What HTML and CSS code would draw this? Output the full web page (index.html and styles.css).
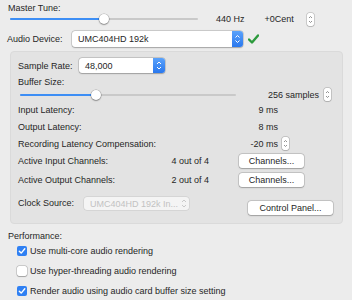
FILE: index.html
```html
<!DOCTYPE html>
<html lang="en">
<head>
  <meta charset="UTF-8">
  <title>Audio Preferences</title>
  <link rel="stylesheet" href="styles.css">
</head>
<body>
  <div class="pane">
    <div class="label-line">Master Tune:</div>
    <div class="tune-row">
      <div class="slider tune-slider">
        <div class="fill" style="width: 50%;"></div>
        <div class="knob" style="left: 50%;"></div>
      </div>
      <span class="hz">440 Hz</span>
      <span class="cent">+0Cent</span>
      <span class="stepper"><svg width="7" height="13" viewBox="0 0 7 13"><path d="M2 5 L3.5 3.5 L5 5 M2 8 L3.5 9.5 L5 8" fill="none" stroke="#777" stroke-width="0.8"/></svg></span>
    </div>

    <div class="device-row">
      <span class="device-label">Audio Device:</span>
      <div class="popup device-popup">
        <span class="popup-text">UMC404HD 192k</span>
        <span class="popup-arrows"><svg width="11" height="16" viewBox="0 0 11 16"><path d="M3.5 6.5 L5.5 4.5 L7.5 6.5 M3.5 9.5 L5.5 11.5 L7.5 9.5" fill="none" stroke="#fff" stroke-width="1"/></svg></span>
      </div>
      <svg class="check" width="11" height="10" viewBox="0 0 11 10"><path d="M1 5.5 L4 8.5 L10 1.5" fill="none" stroke="#2c9a3c" stroke-width="2.4" stroke-linecap="round" stroke-linejoin="round"/></svg>
    </div>

    <div class="group">
      <div class="row rate-row">
        <span class="rate-label">Sample Rate:</span>
        <div class="popup rate-popup">
          <span class="popup-text">48,000</span>
          <span class="popup-arrows"><svg width="12" height="15" viewBox="0 0 12 15"><path d="M4 6 L6 4 L8 6 M4 9 L6 11 L8 9" fill="none" stroke="#fff" stroke-width="1"/></svg></span>
        </div>
      </div>
      <div class="row buf-label">Buffer Size:</div>
      <div class="row buf-row">
        <div class="slider buf-slider">
          <div class="fill" style="width: 35%;"></div>
          <div class="knob" style="left: 35%;"></div>
        </div>
        <span class="samples">256 samples</span>
        <span class="stepper"><svg width="7" height="13" viewBox="0 0 7 13"><path d="M2 5 L3.5 3.5 L5 5 M2 8 L3.5 9.5 L5 8" fill="none" stroke="#777" stroke-width="0.8"/></svg></span>
      </div>
      <div class="row lat-row">
        <span>Input Latency:</span>
        <span class="val">9 ms</span>
        <span class="trail"></span>
      </div>
      <div class="row lat-row">
        <span>Output Latency:</span>
        <span class="val">8 ms</span>
        <span class="trail"></span>
      </div>
      <div class="row lat-row">
        <span>Recording Latency Compensation:</span>
        <span class="val">-20 ms</span>
        <span class="trail"><span class="stepper"><svg width="7" height="13" viewBox="0 0 7 13"><path d="M2 5 L3.5 3.5 L5 5 M2 8 L3.5 9.5 L5 8" fill="none" stroke="#777" stroke-width="0.8"/></svg></span></span>
      </div>
      <div class="row chan-row chan-in">
        <span>Active Input Channels:</span>
        <span class="chan-val">4 out of 4</span>
        <button class="btn chan-btn">Channels...</button>
      </div>
      <div class="row chan-row chan-out">
        <span>Active Output Channels:</span>
        <span class="chan-val">2 out of 4</span>
        <button class="btn chan-btn">Channels...</button>
      </div>
      <div class="row clock-row">
        <span class="clock-label">Clock Source:</span>
        <div class="popup clock-popup">
          <span class="popup-text">UMC404HD 192k In...</span>
          <span class="clock-arrows"><svg width="10" height="13" viewBox="0 0 10 13"><path d="M3 5 L5 3 L7 5 M3 8 L5 10 L7 8" fill="none" stroke="#c4c4c4" stroke-width="0.9"/></svg></span>
        </div>
        <button class="btn panel-btn">Control Panel...</button>
      </div>
    </div>

    <div class="perf-label">Performance:</div>
    <label class="opt"><span class="box on"><svg width="10" height="10" viewBox="0 0 10 10"><path d="M2.3 5.2 L4.2 7.1 L7.8 2.8" fill="none" stroke="#fff" stroke-width="1.4" stroke-linecap="round" stroke-linejoin="round"/></svg></span>Use multi-core audio rendering</label>
    <label class="opt"><span class="box"></span>Use hyper-threading audio rendering</label>
    <label class="opt opt-last"><span class="box on"><svg width="10" height="10" viewBox="0 0 10 10"><path d="M2.3 5.2 L4.2 7.1 L7.8 2.8" fill="none" stroke="#fff" stroke-width="1.4" stroke-linecap="round" stroke-linejoin="round"/></svg></span><span>Render audio using audio card buffer size setting<br>(lower latency, higher CPU load)</span></label>
  </div>
</body>
</html>
```

FILE: styles.css
```css
body {
  margin: 0;
  background-color: #ececec;
  font-family: "Liberation Sans", Arial, sans-serif;
  font-size: 9px;
  color: #262626;
  overflow: hidden;
}

.pane {
  padding: 3px 0 0 0;
  width: 352px;
}

.label-line {
  height: 10px;
  line-height: 10px;
  padding-left: 8px;
}

/* sliders */
.slider {
  position: relative;
  height: 2px;
  background-color: #c9c9c9;
  border-radius: 1px;
}

.slider .fill {
  height: 2px;
  background-color: #3d8ef5;
  border-radius: 1px;
}

.slider .knob {
  position: absolute;
  top: -4px;
  width: 10px;
  height: 10px;
  margin-left: -5px;
  background-color: #fff;
  border-radius: 50%;
  box-shadow: 0 0 0 0.5px rgba(0, 0, 0, 0.25), 0 1px 1.5px rgba(0, 0, 0, 0.3);
}

.tune-row {
  display: flex;
  align-items: center;
  height: 14px;
  margin-top: -1px;
  padding-left: 10px;
}

.tune-slider {
  width: 188px;
}

.hz {
  margin-left: 18px;
}

.cent {
  margin-left: 20px;
}

.tune-row .stepper {
  margin-left: 13px;
}

.stepper {
  display: inline-flex;
  width: 7px;
  height: 13px;
  background-color: #fff;
  border-radius: 2px;
  box-shadow: 0 0 0 0.5px rgba(0, 0, 0, 0.25), 0 0.5px 1px rgba(0, 0, 0, 0.2);
}

/* popups */
.device-row {
  display: flex;
  align-items: center;
  height: 16px;
  margin-top: 5px;
  padding-left: 7px;
}

.device-label {
  width: 65px;
}

.popup {
  display: flex;
  align-items: stretch;
  background-color: #fff;
  border-radius: 3px;
  box-shadow: 0 0 0 0.5px rgba(0, 0, 0, 0.22), 0 0.5px 1.5px rgba(0, 0, 0, 0.22);
  overflow: hidden;
}

.popup-text {
  flex: 1;
  display: flex;
  align-items: center;
  padding-left: 6px;
}

.popup-arrows {
  display: flex;
  background: linear-gradient(#5aa2fb, #2a78ee);
}

.device-popup {
  width: 171px;
  height: 16px;
}

.check {
  margin-left: 5px;
}

/* group box */
.group {
  margin: 4px 9px 0 10px;
  height: 173px;
  box-sizing: border-box;
  padding: 6px 0 0 7px;
  background-color: #e3e3e3;
  border: 1px solid #dadada;
  border-radius: 4px;
}

.row {
  display: flex;
  align-items: center;
}

.rate-row {
  height: 15px;
}

.rate-label {
  width: 61px;
}

.rate-popup {
  width: 86px;
  height: 15px;
}

.buf-label {
  height: 10px;
  margin-top: 4px;
}

.buf-row {
  height: 13px;
  margin-top: 1px;
  padding-left: 2px;
}

.buf-slider {
  width: 216px;
}

.samples {
  margin-left: 32px;
}

.buf-row .stepper {
  margin-left: 5px;
}

.lat-row {
  height: 17px;
}

.lat-row:first-of-type {
  margin-top: 2px;
}

.val {
  margin-left: auto;
}

.trail {
  display: flex;
  align-items: center;
  width: 64px;
}

.trail .stepper {
  margin-left: 4px;
}

.chan-row {
  height: 16px;
}

.chan-in {
  margin-top: 1px;
}

.chan-out {
  margin-top: 3px;
}

.chan-val {
  margin-left: auto;
}

.btn {
  font-family: "Liberation Sans", Arial, sans-serif;
  font-size: 9px;
  color: #262626;
  background-color: #fff;
  border: none;
  border-radius: 3px;
  box-shadow: 0 0 0 0.5px rgba(0, 0, 0, 0.22), 0 0.5px 1.5px rgba(0, 0, 0, 0.22);
  padding: 0;
}

.chan-btn {
  width: 65px;
  height: 14px;
  margin: 0 38px 0 30px;
}

.clock-row {
  align-items: flex-start;
  height: 18px;
  margin-top: 9px;
}

.clock-label {
  width: 66px;
  line-height: 13px;
}

.clock-popup {
  width: 105px;
  height: 13px;
  background-color: #f4f4f4;
  color: #c2c2c2;
  box-shadow: 0 0 0 0.5px rgba(0, 0, 0, 0.12);
}

.clock-arrows {
  display: flex;
}

.panel-btn {
  width: 85px;
  height: 14px;
  margin: 4px 9px 0 auto;
}

/* performance */
.perf-label {
  height: 10px;
  line-height: 10px;
  margin-top: 7px;
  padding-left: 8px;
}

.opt {
  display: flex;
  align-items: center;
  height: 10px;
  margin-top: 10px;
  padding-left: 17px;
}

.opt:first-of-type {
  margin-top: 5px;
}

.box {
  display: flex;
  flex: none;
  width: 10px;
  height: 10px;
  margin-right: 3px;
  box-sizing: border-box;
  background-color: #fff;
  border-radius: 2px;
  box-shadow: 0 0 0 0.5px rgba(0, 0, 0, 0.25), 0 0.5px 1px rgba(0, 0, 0, 0.2);
}

.box.on {
  background-color: #2f80f3;
  box-shadow: none;
}

.opt-last {
  align-items: flex-start;
  line-height: 10px;
}
```
